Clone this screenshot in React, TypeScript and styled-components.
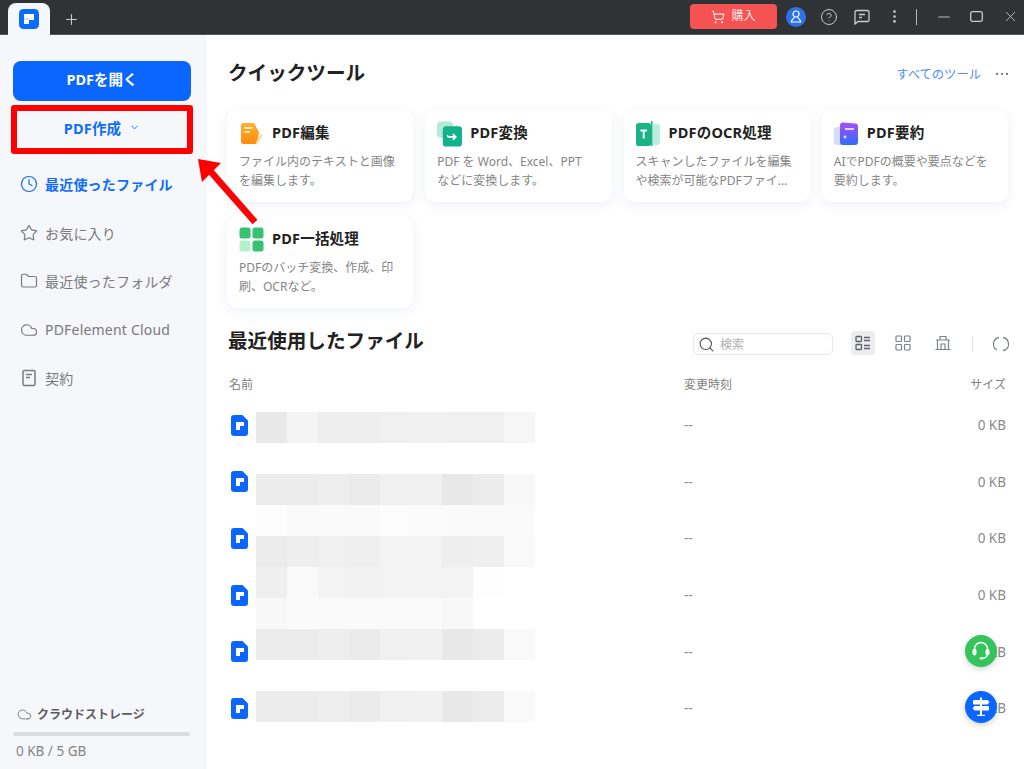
import { ReactNode } from "react";
import styled, { createGlobalStyle } from "styled-components";
import {
    ChevronDown,
    CircleHelp,
    Clock,
    Cloud,
    EllipsisVertical,
    Folder,
    Minus,
    Plus,
    Search,
    ShoppingCart,
    Star,
    X,
} from "lucide-react";

const GlobalStyle = createGlobalStyle`
    html, body {
        margin: 0;
        padding: 0;
        background: #fff;
    }
    body {
        font-family: "Noto Sans", "Noto Sans CJK JP", sans-serif;
    }
    * {
        box-sizing: border-box;
    }
`;

interface ITool {
    title: string;
    desc: string;
    icon: ReactNode;
}

const tools: ITool[] = [
    { title: "PDF編集", desc: "ファイル内のテキストと画像を編集します。", icon: <EditIcon /> },
    { title: "PDF変換", desc: "PDF を Word、Excel、PPT\nなどに変換します。", icon: <ConvertIcon /> },
    { title: "PDFのOCR処理", desc: "スキャンしたファイルを編集や検索が可能なPDFファイ…", icon: <OcrIcon /> },
    { title: "PDF要約", desc: "AIでPDFの概要や要点などを要約します。", icon: <SummaryIcon /> },
    { title: "PDF一括処理", desc: "PDFのバッチ変換、作成、印刷、OCRなど。", icon: <BatchIcon /> },
];

const navItems = [
    { label: "最近使ったファイル", icon: <Clock size={18} strokeWidth={1.6} />, active: true },
    { label: "お気に入り", icon: <Star size={18} strokeWidth={1.6} /> },
    { label: "最近使ったフォルダ", icon: <Folder size={18} strokeWidth={1.6} /> },
    { label: "PDFelement Cloud", icon: <Cloud size={18} strokeWidth={1.6} /> },
    { label: "契約", icon: <ContractIcon /> },
];

// each row of the blur over the file names, grey level per cell, empty = nothing there
const mosaic = [
    ["e8", "f4", "ee", "ee", "f0", "f1", "f0", "f0", "f6"],
    [],
    ["ec", "ec", "ee", "eb", "f0", "f0", "e8", "ec", "f8"],
    ["fd", "fa", "fa", "fa", "fc", "fb", "fa", "fa", "fa"],
    ["ec", "ee", "f0", "ef", "f3", "f3", "ee", "ef", "f9"],
    ["ef", "f9", "f3", "f2", "f3", "f3", "f3", "fe", "ff"],
    ["f8", "fa", "fa", "fa", "fa", "fa", "f8", "ff", "ff"],
    ["ec", "ec", "ee", "eb", "f0", "f1", "e8", "ec", "f9"],
    [],
    ["ec", "ec", "ee", "eb", "f0", "f1", "e8", "ec", "f9"],
];

function LogoIcon() {
    return (
        <svg width="20" height="20" viewBox="0 0 20 20">
            <rect width="20" height="20" rx="4.5" fill="#0a6cff" />
            <path d="M5 5h10v6h-5v4H5z" fill="#fff" />
            <path d="M10 11h-5V9h5z" fill="#cfe0ff" />
        </svg>
    );
}

function FileIcon() {
    return (
        <svg width="17" height="21" viewBox="0 0 17 21">
            <path d="M3 0h8.5L17 5.5V18a3 3 0 0 1-3 3H3a3 3 0 0 1-3-3V3a3 3 0 0 1 3-3z" fill="#0a66ff" />
            <path d="M5 7h8v4H9v4H5z" fill="#fff" />
        </svg>
    );
}

function EditIcon() {
    return (
        <svg width="25" height="25" viewBox="0 0 25 25">
            <defs>
                <linearGradient id="editFill" x1="0" y1="0" x2="0" y2="1">
                    <stop offset="0" stopColor="#ffb02e" />
                    <stop offset="1" stopColor="#ff8a0c" />
                </linearGradient>
            </defs>
            <path d="M4 2h11l5 9-2 12H4a2.500 2.500 0 0 1-2-2.500V4.500A2.500 2.500 0 0 1 4 2z" fill="url(#editFill)" />
            <path d="M6 7h7M6 11h4" stroke="#fff" strokeWidth="1.6" strokeLinecap="round" />
            <path d="M24 14.500 18.500 23l-2 1 .5-3 5-8z" fill="#ffd9a3" />
        </svg>
    );
}

function ConvertIcon() {
    return (
        <svg width="26" height="26" viewBox="0 0 26 26">
            <rect x="0" y="0" width="17" height="17" rx="4" fill="#b3ead8" />
            <rect x="6" y="5" width="20" height="21" rx="3.500" fill="#14b18d" />
            <path d="M11 16h8M16.500 13l3 3-3 3" stroke="#fff" strokeWidth="1.8" fill="none" />
            <path d="M11 14v2" stroke="#fff" strokeWidth="1.4" />
        </svg>
    );
}

function OcrIcon() {
    return (
        <svg width="25" height="25" viewBox="0 0 25 25">
            <rect x="0" y="2" width="15" height="23" rx="2.500" fill="#1bb287" />
            <rect x="15" y="0" width="1.500" height="25" fill="#1bb287" />
            <path d="M17 3h4a3 3 0 0 1 3 3v15a3 3 0 0 1-3 3h-4z" fill="#bdeedd" />
            <path d="M4.500 9.500h6.500M7.700 9.500v8" stroke="#fff" strokeWidth="1.900" />
        </svg>
    );
}

function SummaryIcon() {
    return (
        <svg width="25" height="25" viewBox="0 0 25 25">
            <defs>
                <linearGradient id="summaryFill" x1="0" y1="0" x2="0" y2="1">
                    <stop offset="0" stopColor="#a84df5" />
                    <stop offset="1" stopColor="#2f6bff" />
                </linearGradient>
            </defs>
            <rect x="0" y="6" width="12" height="18" rx="3" fill="#d5dbfb" />
            <path d="M9 1.500 21 2.500a3 3 0 0 1 3 3V21a3 3 0 0 1-3 3H9a3 3 0 0 1-3-3V4.500a3 3 0 0 1 3-3z" fill="url(#summaryFill)" />
            <path d="M11 8h9" stroke="#fff" strokeWidth="1.500" />
            <path d="M11 14.500v3M9.500 16h3" stroke="#fff" strokeWidth="1.100" />
        </svg>
    );
}

function BatchIcon() {
    return (
        <svg width="25" height="25" viewBox="0 0 25 25">
            <rect x="0.500" y="0.500" width="11" height="11" rx="2.500" fill="#36c270" />
            <rect x="13.500" y="0.500" width="11" height="11" rx="2.500" fill="#36c270" />
            <rect x="0.500" y="13.500" width="11" height="11" rx="2.500" fill="#b4f0cb" />
            <rect x="13.500" y="13.500" width="11" height="11" rx="2.500" fill="#36c270" />
        </svg>
    );
}

function ContractIcon() {
    return (
        <svg width="18" height="18" viewBox="0 0 18 18" fill="none" stroke="currentColor" strokeWidth="1.500">
            <rect x="3" y="1.500" width="12" height="15" rx="1.500" />
            <path d="M6 5.500h6M6 8.500h4" />
        </svg>
    );
}

function AvatarIcon() {
    return (
        <svg width="12" height="13" viewBox="0 0 12 13" fill="none" stroke="#fff" strokeWidth="1.200">
            <circle cx="6" cy="4" r="3" />
            <path d="M4.500 7 1.500 11v1h9v-1L7.500 7" />
        </svg>
    );
}

function MessageIcon() {
    return (
        <svg width="16" height="16" viewBox="0 0 16 16" fill="none" stroke="#c9cbcd" strokeWidth="1.300">
            <path d="M2.500 1.500h11a1.500 1.500 0 0 1 1.500 1.500v8a1.500 1.500 0 0 1-1.500 1.500H4l-3 2.500V3a1.500 1.500 0 0 1 1.500-1.500z" />
            <path d="M5 5.500h6M5 8.500h3" />
        </svg>
    );
}

function MaximizeIcon() {
    return (
        <svg width="13" height="11" viewBox="0 0 13 11" fill="none" stroke="#c9cbcd" strokeWidth="1.300">
            <rect x="0.700" y="0.700" width="11.600" height="9.600" rx="1.800" />
        </svg>
    );
}

function ListViewIcon() {
    return (
        <svg width="16" height="16" viewBox="0 0 16 16" fill="none" stroke="#5f6270" strokeWidth="1.300">
            <rect x="1" y="1.500" width="5.500" height="5" rx="0.800" />
            <rect x="1" y="9.500" width="5.500" height="5" rx="0.800" />
            <path d="M9 2.500h6M9 5.500h6M9 10.500h6M9 13.500h6" />
        </svg>
    );
}

function GridViewIcon() {
    return (
        <svg width="16" height="16" viewBox="0 0 16 16" fill="none" stroke="#7f828e" strokeWidth="1.200">
            <rect x="1" y="1" width="5.500" height="5.500" rx="0.800" />
            <rect x="9.500" y="1" width="5.500" height="5.500" rx="0.800" />
            <rect x="1" y="9.500" width="5.500" height="5.500" rx="0.800" />
            <rect x="9.500" y="9.500" width="5.500" height="5.500" rx="0.800" />
        </svg>
    );
}

function ArchiveIcon() {
    return (
        <svg width="16" height="16" viewBox="0 0 16 16" fill="none" stroke="#7f828e" strokeWidth="1.200">
            <path d="M5 5V1.500h6V5" />
            <path d="M1 5h14M2.500 5v9.500h11V5M0.500 14.500h15" />
            <path d="M6 14.500V9h4v5.500" />
        </svg>
    );
}

function RefreshIcon() {
    return (
        <svg width="16" height="16" viewBox="0 0 16 16" fill="none" stroke="#7f828e" strokeWidth="1.300">
            <path d="M6 1.500A6.700 6.700 0 0 0 4 14" />
            <path d="M10 1.500A6.700 6.700 0 0 1 12 14" />
            <path d="M10 14.500l2.500-.500" />
        </svg>
    );
}

function HeadsetIcon() {
    return (
        <svg width="20" height="20" viewBox="0 0 20 20" fill="none">
            <path d="M3.500 10V8a6.500 6.500 0 0 1 13 0v2" stroke="#fff" strokeWidth="1.500" />
            <rect x="1.500" y="8" width="4" height="6.500" rx="2" fill="#fff" />
            <rect x="14.500" y="8" width="4" height="6.500" rx="2" fill="#fff" />
            <path d="M16 14c0 2-2 3-4.500 3.200" stroke="#fff" strokeWidth="1.300" />
            <ellipse cx="10.500" cy="17.400" rx="2" ry="1.200" fill="#fff" />
        </svg>
    );
}

function SignpostIcon() {
    return (
        <svg width="20" height="20" viewBox="0 0 20 20" fill="#fff">
            <rect x="9" y="0.500" width="2" height="18" />
            <path d="M3 3h13.500L18.500 5 16.500 7.500H3a1 1 0 0 1-1-1V4a1 1 0 0 1 1-1z" />
            <path d="M17 9H3.500L1.500 11.200l2 2.300H17a1 1 0 0 0 1-1V10a1 1 0 0 0-1-1z" />
            <rect x="6" y="17.800" width="8" height="1.200" />
        </svg>
    );
}

export default function App() {
    return (
        <Page>
            <GlobalStyle />
            <TitleBar>
                <Tab>
                    <LogoIcon />
                </Tab>
                <NewTab>
                    <Plus size={17} strokeWidth={1.5} />
                </NewTab>
                <BarActions>
                    <BuyButton>
                        <ShoppingCart size={14} strokeWidth={1.8} />
                        <span>購入</span>
                    </BuyButton>
                    <AvatarSlot>
                        <Avatar>
                            <AvatarIcon />
                        </Avatar>
                    </AvatarSlot>
                    <BarSlot>
                        <CircleHelp size={18} strokeWidth={1.3} />
                    </BarSlot>
                    <BarSlot>
                        <MessageIcon />
                    </BarSlot>
                    <BarSlot>
                        <EllipsisVertical size={17} strokeWidth={1.8} />
                    </BarSlot>
                    <BarSeparator />
                    <BarSlot>
                        <Minus size={18} strokeWidth={1.2} />
                    </BarSlot>
                    <BarSlot>
                        <MaximizeIcon />
                    </BarSlot>
                    <CloseSlot>
                        <X size={17} strokeWidth={1.2} />
                    </CloseSlot>
                </BarActions>
            </TitleBar>

            <Body>
                <Sidebar>
                    <OpenButton>PDFを開く</OpenButton>
                    <CreateButton>
                        PDF作成
                        <ChevronDown size={11} strokeWidth={2} />
                    </CreateButton>
                    <Nav>
                        {navItems.map((item) => (
                            <NavItem key={item.label} $active={item.active}>
                                {item.icon}
                                {item.label}
                            </NavItem>
                        ))}
                    </Nav>
                    <Storage>
                        <StorageTitle>
                            <Cloud size={15} strokeWidth={1.4} />
                            クラウドストレージ
                        </StorageTitle>
                        <StorageBar />
                        <StorageText>0 KB / 5 GB</StorageText>
                    </Storage>
                </Sidebar>

                <Main>
                    <SectionHeader>
                        <SectionTitle>クイックツール</SectionTitle>
                        <AllTools>すべてのツール</AllTools>
                        <MoreDots>
                            <i />
                            <i />
                            <i />
                        </MoreDots>
                    </SectionHeader>

                    <ToolGrid>
                        {tools.map((tool) => (
                            <ToolCard key={tool.title}>
                                <ToolHead>
                                    <ToolIcon>{tool.icon}</ToolIcon>
                                    <ToolTitle>{tool.title}</ToolTitle>
                                </ToolHead>
                                <ToolDesc>{tool.desc}</ToolDesc>
                            </ToolCard>
                        ))}
                    </ToolGrid>

                    <FilesHeader>
                        <SectionTitle>最近使用したファイル</SectionTitle>
                        <SearchBox>
                            <Search size={17} strokeWidth={1.5} />
                            検索
                        </SearchBox>
                        <ViewButton $active>
                            <ListViewIcon />
                        </ViewButton>
                        <ViewButton>
                            <GridViewIcon />
                        </ViewButton>
                        <ViewButton>
                            <ArchiveIcon />
                        </ViewButton>
                        <ToolSeparator />
                        <RefreshSlot>
                            <RefreshIcon />
                        </RefreshSlot>
                    </FilesHeader>

                    <TableHead>
                        <span>名前</span>
                        <span>変更時刻</span>
                        <SizeCell>サイズ</SizeCell>
                    </TableHead>

                    <FileList>
                        {[0, 1, 2, 3, 4, 5].map((n) => (
                            <FileRow key={n}>
                                <FileName>
                                    <FileIcon />
                                </FileName>
                                <span>--</span>
                                <SizeCell>0 KB</SizeCell>
                            </FileRow>
                        ))}
                        <Mosaic>
                            {mosaic.map((row, r) => (
                                <MosaicRow key={r}>
                                    {row.map((grey, c) => (
                                        <MosaicCell key={c} style={{ backgroundColor: `#${grey}${grey}${grey}` }} />
                                    ))}
                                </MosaicRow>
                            ))}
                        </Mosaic>
                    </FileList>

                    <HelpFab>
                        <HeadsetIcon />
                    </HelpFab>
                    <GuideFab>
                        <SignpostIcon />
                    </GuideFab>
                </Main>
            </Body>

            <RedFrame />
            <RedArrow width="70" height="76" viewBox="0 0 70 76">
                <path d="M59 66 15 16" stroke="#ff0000" strokeWidth="6.500" />
                <path d="M2 3 25 7 6 26z" fill="#ff0000" />
            </RedArrow>
        </Page>
    );
}

const Page = styled.div`
    position: relative;
    width: 100%;
    height: 100vh;
    display: flex;
    flex-direction: column;
    overflow: hidden;
`;

const TitleBar = styled.header`
    height: 35px;
    flex: none;
    display: flex;
    align-items: flex-start;
    background: #303336;
    color: #c9cbcd;
    border-bottom: 1px solid #55585b;
`;

const Tab = styled.div`
    width: 42px;
    height: 32px;
    margin: 3px 0 0 8px;
    padding-top: 6px;
    display: flex;
    justify-content: center;
    background: #f5f7fb;
    border-radius: 8px 8px 0 0;
`;

const NewTab = styled.div`
    width: 42px;
    height: 32px;
    display: flex;
    align-items: center;
    justify-content: center;
    margin-top: 3px;
`;

const BarActions = styled.div`
    margin-left: auto;
    height: 33px;
    display: flex;
    align-items: center;
`;

const BuyButton = styled.div`
    width: 87px;
    height: 25px;
    margin-right: 3px;
    display: flex;
    align-items: center;
    justify-content: center;
    gap: 6px;
    background: #f55252;
    border-radius: 4px;
    color: #ffe3e3;
    font-size: 12px;

    span {
        padding-bottom: 3px;
    }
`;

const BarSlot = styled.div`
    width: 33px;
    display: flex;
    justify-content: center;
    align-items: center;
`;

const AvatarSlot = styled(BarSlot)`
    width: 32px;
`;

const CloseSlot = styled(BarSlot)`
    width: 27px;
    margin-left: 4px;
`;

const Avatar = styled.div`
    width: 20px;
    height: 20px;
    border-radius: 50%;
    background: #2d72e8;
    display: flex;
    align-items: center;
    justify-content: center;
`;

const BarSeparator = styled.div`
    width: 1px;
    height: 16px;
    margin: 0 10px 0 5px;
    background: #b5b7b9;
`;

const Body = styled.div`
    flex: 1;
    min-height: 0;
    display: flex;
`;

const Sidebar = styled.aside`
    width: 207px;
    flex: none;
    display: flex;
    flex-direction: column;
    padding: 26px 16px 9px 13px;
    background: #f5f7fb;
`;

const OpenButton = styled.div`
    height: 40px;
    padding-bottom: 5px;
    display: flex;
    align-items: center;
    justify-content: center;
    background: #0a66ff;
    border-radius: 8px;
    color: #fff;
    font-size: 14.500px;
    font-weight: 700;
`;

const CreateButton = styled.div`
    height: 36px;
    margin-top: 11px;
    padding-bottom: 5px;
    display: flex;
    align-items: center;
    justify-content: center;
    gap: 8px;
    color: #0f6cff;
    font-size: 14.500px;
    font-weight: 700;
    letter-spacing: 0.2px;
`;

const Nav = styled.nav`
    margin-top: 12px;
    display: flex;
    flex-direction: column;
`;

const NavItem = styled.div<{ $active?: boolean }>`
    height: 48.500px;
    padding-left: 7px;
    display: flex;
    align-items: center;
    gap: 7px;
    color: ${(p) => (p.$active ? "#0f6cff" : "#7a7a7a")};
    font-size: 14px;
    font-weight: ${(p) => (p.$active ? 700 : 400)};
    letter-spacing: 0.2px;
    white-space: nowrap;
`;

const Storage = styled.div`
    margin-top: auto;
    display: flex;
    flex-direction: column;
`;

const StorageTitle = styled.div`
    height: 18px;
    padding-left: 4px;
    display: flex;
    align-items: center;
    gap: 5px;
    color: #5c5c5c;
    font-size: 12px;
    font-weight: 700;
    white-space: nowrap;

    svg {
        color: #777;
    }
`;

const StorageBar = styled.div`
    height: 4px;
    margin: 9px 1px 0 0;
    border-radius: 2px;
    background: #dcdcdc;
`;

const StorageText = styled.div`
    height: 18px;
    margin-top: 6px;
    padding-left: 3px;
    color: #858585;
    font-size: 13.500px;
    line-height: 18px;
`;

const Main = styled.main`
    position: relative;
    flex: 1;
    min-width: 0;
    padding: 0 16px 0 20px;
    background: #fff;
`;

const SectionHeader = styled.div`
    height: 75px;
    padding-left: 1px;
    display: flex;
    align-items: center;
`;

const SectionTitle = styled.h2`
    margin: 0;
    padding-bottom: 3px;
    color: #222;
    font-size: 19.600px;
    font-weight: 700;
    white-space: nowrap;
`;

const AllTools = styled.span`
    margin-left: auto;
    padding-top: 2px;
    color: #4a8cff;
    font-size: 12.300px;
`;

const MoreDots = styled.span`
    margin: 2px 0 0 15px;
    width: 12px;
    display: flex;
    justify-content: space-between;

    i {
        width: 2px;
        height: 2px;
        border-radius: 50%;
        background: #555;
    }
`;

const ToolGrid = styled.div`
    display: grid;
    grid-template-columns: repeat(4, 1fr);
    grid-auto-rows: 92px;
    column-gap: 12px;
    row-gap: 14px;
`;

const ToolCard = styled.div`
    padding: 11px 12px;
    background: #fff;
    border-radius: 10px;
    box-shadow: 0 3px 12px rgba(40, 60, 110, 0.08);
`;

const ToolHead = styled.div`
    height: 25px;
    display: flex;
    align-items: center;
    gap: 8px;
`;

const ToolIcon = styled.div`
    width: 25px;
    height: 25px;
    flex: none;
    display: flex;
`;

const ToolTitle = styled.div`
    padding-bottom: 4px;
    color: #222;
    font-size: 14.500px;
    font-weight: 700;
    letter-spacing: 0.2px;
    white-space: nowrap;
`;

const ToolDesc = styled.div`
    margin-top: 6px;
    color: #858585;
    font-size: 12px;
    line-height: 19px;
    white-space: pre-line;
`;

const FilesHeader = styled.div`
    height: 66px;
    padding-left: 1px;
    display: flex;
    align-items: center;
`;

const SearchBox = styled.div`
    width: 140px;
    height: 22px;
    margin: 6px 0 0 auto;
    padding-left: 4px;
    display: flex;
    align-items: center;
    gap: 5px;
    border: 1.500px solid #e6e6e6;
    border-radius: 6px;
    color: #b0b0b0;
    font-size: 12px;

    svg {
        color: #4a4d5c;
    }
`;

const ViewButton = styled.div<{ $active?: boolean }>`
    width: 24px;
    height: 24px;
    margin: 4px 0 0 ${(p) => (p.$active ? "18px" : "16px")};
    display: flex;
    align-items: center;
    justify-content: center;
    border-radius: 4px;
    background: ${(p) => (p.$active ? "#ececec" : "transparent")};
`;

const ToolSeparator = styled.div`
    width: 1px;
    height: 16px;
    margin: 6px 0 0 17px;
    background: #e2e2e2;
`;

const RefreshSlot = styled.div`
    width: 16px;
    margin: 6px -1px 0 20px;
    display: flex;
`;

const TableHead = styled.div`
    height: 20px;
    padding-left: 2px;
    display: grid;
    grid-template-columns: 455px 1fr auto;
    align-items: center;
    color: #808080;
    font-size: 12px;
`;

const SizeCell = styled.span`
    margin-right: 2px;
`;

const FileList = styled.div`
    position: relative;
    margin-top: 3px;
`;

const FileRow = styled.div`
    height: 56.600px;
    display: grid;
    grid-template-columns: 457px 1fr auto;
    align-items: center;
    color: #8a8a8a;
    font-size: 13.500px;
`;

const FileName = styled.div`
    padding-left: 4px;
    display: flex;
`;

const Mosaic = styled.div`
    position: absolute;
    left: 29px;
    top: 15px;
    pointer-events: none;
`;

const MosaicRow = styled.div`
    height: 31px;
    display: flex;
`;

const MosaicCell = styled.div`
    width: 31px;
    height: 31px;
`;

const Fab = styled.div`
    position: absolute;
    left: 758px;
    width: 32px;
    height: 32px;
    display: flex;
    align-items: center;
    justify-content: center;
    border-radius: 50%;
    box-shadow: 0 2px 6px rgba(0, 0, 0, 0.18);
`;

const HelpFab = styled(Fab)`
    top: 600px;
    background: #35c35c;
`;

const GuideFab = styled(Fab)`
    top: 656px;
    background: #0a66ff;
`;

const RedFrame = styled.div`
    position: absolute;
    left: 11px;
    top: 105px;
    width: 182px;
    height: 49px;
    border: 6px solid #ff0000;
    border-radius: 3px;
    pointer-events: none;
`;

const RedArrow = styled.svg`
    position: absolute;
    left: 196px;
    top: 156px;
    pointer-events: none;
`;
